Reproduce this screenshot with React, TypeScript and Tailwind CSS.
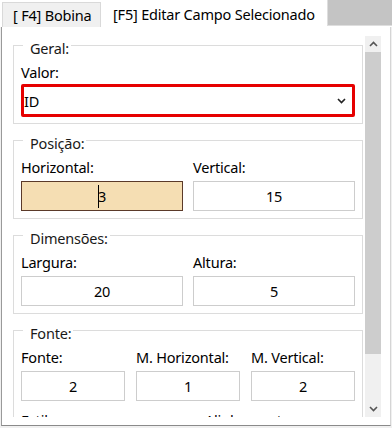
import React from "react";

function Group({
  title,
  children,
  pb = "pb-[7px]",
}: {
  title: string;
  children: React.ReactNode;
  pb?: string;
}) {
  return (
    <div className={`relative border border-[#dcdcdc] px-[7px] pt-[16px] ${pb}`}>
      <span className="absolute left-[9px] top-[-8px] bg-white pl-[7px] pr-[2px] leading-[20px] text-[#1a1a1a]">
        {title}
      </span>
      {children}
    </div>
  );
}

function Field({
  label,
  value,
  active = false,
}: {
  label: string;
  value: string;
  active?: boolean;
}) {
  return (
    <div className="min-w-0">
      <div className="leading-[20px] whitespace-nowrap">{label}</div>
      {active ? (
        <div className="mt-[4px] h-[30px] border border-[#5b3a29] bg-[#f5deb3] flex items-center justify-center">
          <span className="w-px h-[23px] bg-black" />
          <span className="leading-[20px] -ml-px">{value}</span>
        </div>
      ) : (
        <div className="mt-[4px] h-[30px] border border-[#cdcdcd] bg-white flex items-center justify-center leading-[20px]">
          {value}
        </div>
      )}
    </div>
  );
}

function ChevronUp() {
  return (
    <svg width="9" height="6" viewBox="0 0 9 6">
      <polyline points="1,5 4.5,1.5 8,5" fill="none" stroke="#555" strokeWidth="1.6" />
    </svg>
  );
}
function ChevronDown({ color = "#555" }: { color?: string }) {
  return (
    <svg width="9" height="6" viewBox="0 0 9 6">
      <polyline points="1,1 4.5,4.5 8,1" fill="none" stroke={color} strokeWidth="1.6" />
    </svg>
  );
}

export default function App() {
  return (
    <div className="w-[392px] h-[428px] bg-[#f0f0f0] overflow-hidden text-[14.5px] tracking-[-0.2px] text-black font-['Noto_Sans',sans-serif]">
      {/* Tabs */}
      <div className="flex h-[27px] bg-white">
        <div className="w-[2px]" />
        <div className="mt-[2px] w-[99px] h-[25px] bg-[#f0f0f0] border border-b-0 border-[#d9d9d9] flex items-center pl-[10px] leading-[20px] whitespace-nowrap">
          [ F4] Bobina
        </div>
        <div className="w-[226px] h-[27px] bg-white flex items-center pl-[12px] leading-[20px] whitespace-nowrap">
          [F5] Editar Campo Selecionado
        </div>
        <div className="flex-1 h-[26px] bg-[#c4c4c4] border-l border-b border-[#dedede]" />
      </div>

      {/* Panel */}
      <div className="ml-[1px] w-[390px] h-[399px] bg-white border-l border-r border-b border-l-[#9a9a9a] border-r-[#d5d5d5] border-b-[#8a8a8a] flex pt-[9px] pb-[8px] pl-[11px]">
        <div className="w-[350px] h-[381px] overflow-hidden pt-[9px] flex flex-col gap-[16px]">
          <Group title="Geral:" pb="pb-[6px]">
            <div className="leading-[20px]">Valor:</div>
            <div className="mt-[2px] h-[33px] border-[3px] border-[#e60000] rounded-[2px] flex items-center justify-between pr-[6px]">
              <span className="leading-[20px]">ID</span>
              <ChevronDown color="#222" />
            </div>
          </Group>

          <Group title="Posição:">
            <div className="grid grid-cols-2 gap-x-[10px]">
              <Field label="Horizontal:" value="3" active />
              <Field label="Vertical:" value="15" />
            </div>
          </Group>

          <Group title="Dimensões:">
            <div className="grid grid-cols-2 gap-x-[10px]">
              <Field label="Largura:" value="20" />
              <Field label="Altura:" value="5" />
            </div>
          </Group>

          <Group title="Fonte:">
            <div className="grid grid-cols-3 gap-x-[11px]">
              <Field label="Fonte:" value="2" />
              <Field label="M. Horizontal:" value="1" />
              <Field label="M. Vertical:" value="2" />
            </div>
            <div className="mt-[9px] flex leading-[20px]">
              <span>Estilo:</span>
              <span className="ml-[145px]">Alinhamento:</span>
            </div>
            <div className="mt-[4px] h-[30px]" />
          </Group>
        </div>

        {/* Scrollbar */}
        <div className="ml-[2px] w-[16px] h-[381px] bg-[#f0f0f0] flex flex-col">
          <div className="h-[16px] flex items-center justify-center">
            <ChevronUp />
          </div>
          <div className="h-[302px] bg-[#cdcdcd]" />
          <div className="flex-1" />
          <div className="h-[16px] flex items-center justify-center">
            <ChevronDown />
          </div>
        </div>
      </div>
    </div>
  );
}
